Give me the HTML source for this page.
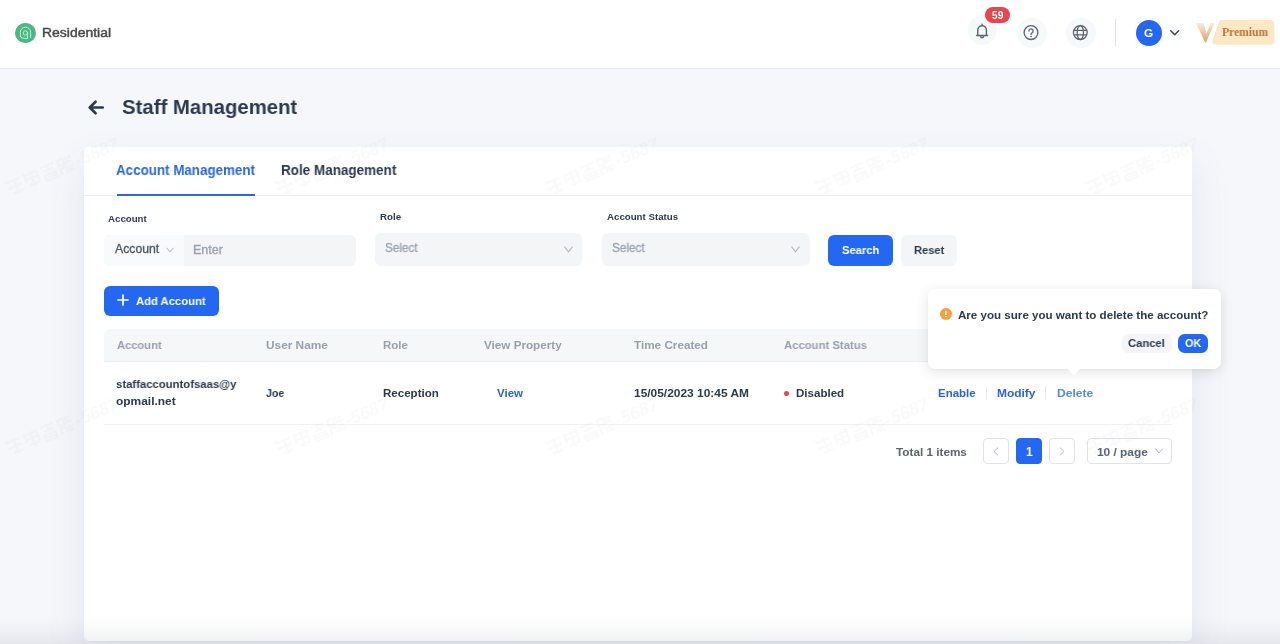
<!DOCTYPE html>
<html><head><meta charset="utf-8">
<style>
*{box-sizing:border-box;margin:0;padding:0}
html,body{width:1280px;height:644px;overflow:hidden}
body{background:#f5f7fb;font-family:"Liberation Sans",sans-serif;color:#2b394d;position:relative}
.hdr{position:absolute;left:0;top:0;width:1280px;height:69px;background:#fff;border-bottom:1px solid #e8e9ef}
.t{position:absolute;white-space:nowrap;line-height:20px;height:20px;will-change:transform}
.b{font-weight:bold}
.card{position:absolute;left:84px;top:147px;width:1108px;height:494px;background:#fff;border-radius:5px;box-shadow:0 18px 40px rgba(70,90,130,.11)}
.box{position:absolute;background:#f3f5f8;border-radius:5px}
.btn{position:absolute;border-radius:5px}
.blue{background:#2468f2 !important}
.circ{position:absolute;width:29.5px;height:29.5px;border-radius:50%;background:#f7f8fa}
.pg{position:absolute;top:438px;height:26px;border:1px solid #e1e3e8;border-radius:4px;background:#fff}
svg{position:absolute;overflow:visible}
</style></head><body>

<!-- HEADER -->
<div class="hdr"></div>
<div id="logo" style="position:absolute;left:15.4px;top:22.7px;width:20.8px;height:20.8px;border-radius:50%;background:#4db682"></div>
<svg style="left:10px;top:17px" width="32" height="32" viewBox="0 0 32 32" fill="none" stroke="#b6f3d4" stroke-width="1" stroke-linecap="round" stroke-linejoin="round">
  <path d="M20.6 20.6 V15.2 A5.1 5.1 0 0 0 10.4 15.2 V19 Q10.4 20.7 12.2 20.9 L17 21.6"/>
  <circle cx="15.4" cy="16" r="2.2"/><path d="M17.6 16 V21.5"/>
</svg>
<span id="brand" class="t" style="-webkit-text-stroke:.45px #4a4a4a;left:42.00px;top:22.50px;font-size:13px;color:#474747;transform:scaleX(1.0727);transform-origin:0 50%">Residential</span>

<div class="circ" style="left:967.5px;top:15.4px"></div>
<div class="circ" style="left:1017px;top:18px"></div>
<div class="circ" style="left:1066px;top:18px"></div>
<!-- bell -->
<svg style="left:975px;top:22.5px" width="14" height="17" viewBox="0 0 14 17" fill="none" stroke="#5b6474" stroke-width="1.4" stroke-linecap="round" stroke-linejoin="round">
  <path d="M1.6 12.5 H12.6 M2.8 12.5 V7 a4.3 4.3 0 0 1 8.6 0 V12.5 M7.1 1.2 V2.4"/>
  <path d="M5.5 13.6 a1.7 1.7 0 0 0 3.2 0"/>
</svg>
<!-- badge -->
<div style="position:absolute;left:985.2px;top:7.2px;width:24.6px;height:16.1px;border-radius:8px;background:#e6464c"></div>
<span id="b59" class="t b" style="left:992.00px;top:5.54px;font-size:10px;color:#fff;transform:scaleX(1.0177);transform-origin:0 50%">59</span>
<!-- help -->
<svg style="left:1023px;top:25px" width="16" height="16" viewBox="0 0 16 16" fill="none" stroke="#5b6474" stroke-width="1.3" stroke-linecap="round">
  <circle cx="8" cy="7.6" r="6.9"/>
  <path d="M5.9 6 a2.1 2.1 0 1 1 3.2 1.8 c-.8.5-1.1.9-1.1 1.8"/>
  <circle cx="8" cy="11.6" r=".5" fill="#5b6474" stroke-width=".6"/>
</svg>
<!-- globe -->
<svg style="left:1072px;top:25px" width="16" height="16" viewBox="0 0 16 16" fill="none" stroke="#5b6474" stroke-width="1.3">
  <circle cx="8.3" cy="7.6" r="6.9"/>
  <ellipse cx="8.3" cy="7.6" rx="3.2" ry="6.9"/>
  <path d="M1.9 5.4 H14.7 M1.9 9.8 H14.7"/>
</svg>
<div style="position:absolute;left:1114.5px;top:19px;width:1.4px;height:26.5px;background:#e3e5eb"></div>
<!-- avatar -->
<div style="position:absolute;left:1136px;top:20px;width:26px;height:26px;border-radius:50%;background:#2468f2"></div>
<span id="avG" class="t b" style="left:1144.00px;top:22.52px;font-size:11.5px;color:#fff;transform:scaleX(1.0240);transform-origin:0 50%">G</span>
<svg style="left:1170px;top:30px" width="10" height="6" viewBox="0 0 10 6" fill="none" stroke="#3a4658" stroke-width="1.5" stroke-linecap="round" stroke-linejoin="round"><path d="M.8 .8 L4.7 4.7 L8.6 .8"/></svg>
<!-- premium -->
<svg style="left:1195px;top:19px" width="82" height="28" viewBox="0 0 82 28">
  <defs><linearGradient id="vg" x1="0" y1="0" x2="0" y2="1"><stop offset="0" stop-color="#fdebd6"/><stop offset="1" stop-color="#d9a273"/></linearGradient></defs>
  <path d="M26.5 1.1 H75.3 a4 4 0 0 1 4 4 V21.8 a4 4 0 0 1 -4 4 H21.8 Q16 25.8 17.6 20.5 L24 3 Q24.8 1.1 26.5 1.1 Z" fill="#fde8c5"/>
  <path d="M1 4 H8.5 L11.5 14.5 L15.5 4 H19.5 L11 23.5 L10 23.5 Z" fill="url(#vg)"/>
</svg>
<span id="prem" class="t b" style="left:1222.00px;top:22.20px;font-size:12px;color:#b9733a;font-family:'Liberation Serif',serif;transform:scaleX(0.9665);transform-origin:0 50%">Premium</span>

<!-- TITLE -->
<svg style="left:88px;top:100px" width="16" height="15" viewBox="0 0 16 15" fill="none" stroke="#2c3a4e" stroke-width="2.6" stroke-linecap="round" stroke-linejoin="round"><path d="M14.8 7.5 H2 M7.6 1.7 L1.7 7.5 L7.6 13.3"/></svg>
<span id="title" class="t b" style="left:122.00px;top:95.42px;font-size:21px;line-height:24px;height:24px;color:#2c3a4e;transform:scaleX(0.9693);transform-origin:0 50%">Staff Management</span>

<!-- CARD -->
<div class="card"></div>
<span id="tab1" class="t b" style="left:116.00px;top:159.95px;font-size:14px;color:#2b68e0;transform:scaleX(0.9554);transform-origin:0 50%">Account Management</span>
<span id="tab2" class="t b" style="left:281.00px;top:159.95px;font-size:14px;color:#2c3a4e;transform:scaleX(0.9625);transform-origin:0 50%">Role Management</span>
<div style="position:absolute;left:84px;top:195px;width:1108px;height:1px;background:#eaecf0"></div>
<div style="position:absolute;left:116.5px;top:193.6px;width:138.8px;height:2.2px;background:#2b68e0"></div>

<!-- FILTERS -->
<span id="l1" class="t b" style="left:108.00px;top:208.94px;font-size:9.7px;color:#2c3a4e;transform:scaleX(0.9930);transform-origin:0 50%">Account</span>
<span id="l2" class="t b" style="left:380.00px;top:207.24px;font-size:9.7px;color:#2c3a4e;transform:scaleX(1.0029);transform-origin:0 50%">Role</span>
<span id="l3" class="t b" style="left:607.00px;top:207.04px;font-size:9.7px;color:#2c3a4e;transform:scaleX(0.9976);transform-origin:0 50%">Account Status</span>

<div class="box" style="left:104px;top:235px;width:252px;height:31px;border-radius:6px;background:#f3f5f7"></div>
<div style="position:absolute;left:104px;top:235px;width:80px;height:31px;background:#f9fafb;border-radius:6px 0 0 6px"></div>
<span id="s0" class="t" style="-webkit-text-stroke:.3px currentColor;left:115.00px;top:239.04px;font-size:12px;color:#4b5668;transform:scaleX(1.0201);transform-origin:0 50%">Account</span>
<svg style="left:166px;top:247px" width="8" height="6" viewBox="0 0 8 6" fill="none" stroke="#aab1bd" stroke-width="1"><path d="M.5 .8 L4 4.8 L7.5 .8"/></svg>
<span id="s1" class="t" style="-webkit-text-stroke:.3px currentColor;left:193.00px;top:239.84px;font-size:12px;color:#9aa2b0;transform:scaleX(1.0403);transform-origin:0 50%">Enter</span>

<div class="box" style="left:375px;top:233px;width:207px;height:33px;border-radius:6px;background:#f3f5f7"></div>
<span id="s2" class="t" style="-webkit-text-stroke:.3px currentColor;left:385.00px;top:238.14px;font-size:12px;color:#9aa2b0;transform:scaleX(0.9777);transform-origin:0 50%">Select</span>
<svg style="left:564.4px;top:246.4px" width="9" height="7" viewBox="0 0 9 7" fill="none" stroke="#b0b6c1" stroke-width="1.1"><path d="M.5 .6 L4.5 5.8 L8.5 .6"/></svg>

<div class="box" style="left:602px;top:233px;width:208px;height:33px;border-radius:6px;background:#f3f5f7"></div>
<span id="s3" class="t" style="-webkit-text-stroke:.3px currentColor;left:612.00px;top:238.14px;font-size:12px;color:#9aa2b0;transform:scaleX(0.9802);transform-origin:0 50%">Select</span>
<svg style="left:791.2px;top:246.4px" width="9" height="7" viewBox="0 0 9 7" fill="none" stroke="#b0b6c1" stroke-width="1.1"><path d="M.5 .6 L4.5 5.8 L8.5 .6"/></svg>

<div class="btn blue" style="left:828px;top:235px;width:65px;height:31px;border-radius:6px"></div>
<span id="bs" class="t b" style="left:842.00px;top:240.02px;font-size:11.5px;color:#fff;transform:scaleX(0.9730);transform-origin:0 50%">Search</span>
<div class="btn" style="left:901px;top:235px;width:56px;height:31px;background:#f3f5f7;border-radius:6px"></div>
<span id="br" class="t b" style="left:914.00px;top:240.02px;font-size:11.5px;color:#2c3a4e;transform:scaleX(0.9687);transform-origin:0 50%">Reset</span>

<!-- ADD ACCOUNT -->
<div class="btn blue" style="left:104px;top:286px;width:115px;height:30px;border-radius:6px"></div>
<svg style="left:117px;top:293.8px" width="12" height="12" viewBox="0 0 12 12" stroke="#fff" stroke-width="1.7" stroke-linecap="round"><path d="M6 1 V11 M1 6 H11"/></svg>
<span id="ba" class="t b" style="left:136.00px;top:291.02px;font-size:11.5px;color:#fff;transform:scaleX(0.9791);transform-origin:0 50%">Add Account</span>

<!-- TABLE -->
<div style="position:absolute;left:104px;top:329px;width:1068px;height:33px;background:#f6f7f9;border-radius:6px 6px 0 0;border-bottom:1px solid #eceef2"></div>
<span id="h1" class="t b" style="left:117.00px;top:335.12px;font-size:11.5px;color:#98a0ae;transform:scaleX(0.9691);transform-origin:0 50%">Account</span>
<span id="h2" class="t b" style="left:266.00px;top:335.12px;font-size:11.5px;color:#98a0ae;transform:scaleX(1.0298);transform-origin:0 50%">User Name</span>
<span id="h3" class="t b" style="left:383.00px;top:335.12px;font-size:11.5px;color:#98a0ae;transform:scaleX(0.9843);transform-origin:0 50%">Role</span>
<span id="h4" class="t b" style="left:484.00px;top:335.12px;font-size:11.5px;color:#98a0ae;transform:scaleX(1.0152);transform-origin:0 50%">View Property</span>
<span id="h5" class="t b" style="left:634.00px;top:335.12px;font-size:11.5px;color:#98a0ae;transform:scaleX(1.0184);transform-origin:0 50%">Time Created</span>
<span id="h6" class="t b" style="left:784.00px;top:335.12px;font-size:11.5px;color:#98a0ae;transform:scaleX(0.9834);transform-origin:0 50%">Account Status</span>

<span id="r1a" class="t b" style="left:116.00px;top:374.32px;font-size:11.5px;transform:scaleX(0.9844);transform-origin:0 50%">staffaccountofsaas@y</span>
<span id="r1b" class="t b" style="left:116.00px;top:391.32px;font-size:11.5px;transform:scaleX(1.0379);transform-origin:0 50%">opmail.net</span>
<span id="r2" class="t b" style="left:266.00px;top:383.02px;font-size:11.5px;transform:scaleX(0.9174);transform-origin:0 50%">Joe</span>
<span id="r3" class="t b" style="left:383.00px;top:383.02px;font-size:11.5px;transform:scaleX(1.0039);transform-origin:0 50%">Reception</span>
<span id="r4" class="t b" style="left:497.00px;top:383.02px;font-size:11.5px;color:#2a63d8;transform:scaleX(1.0024);transform-origin:0 50%">View</span>
<span id="r5" class="t b" style="left:634.00px;top:383.02px;font-size:11.5px;transform:scaleX(1.0375);transform-origin:0 50%">15/05/2023 10:45 AM</span>
<div style="position:absolute;left:783.6px;top:390.6px;width:5.6px;height:5.6px;border-radius:50%;background:#e5484d"></div>
<span id="r6" class="t b" style="left:796.00px;top:383.02px;font-size:11.5px;transform:scaleX(1.0048);transform-origin:0 50%">Disabled</span>
<span id="a1" class="t b" style="left:938.00px;top:383.22px;font-size:11.5px;color:#2a63d8;transform:scaleX(0.9981);transform-origin:0 50%">Enable</span>
<div style="position:absolute;left:986px;top:387px;width:1px;height:13px;background:#e6e8ed"></div>
<span id="a2" class="t b" style="left:997.00px;top:383.22px;font-size:11.5px;color:#2a63d8;transform:scaleX(1.0390);transform-origin:0 50%">Modify</span>
<div style="position:absolute;left:1045px;top:387px;width:1px;height:13px;background:#e6e8ed"></div>
<span id="a3" class="t b" style="left:1057.00px;top:383.22px;font-size:11.5px;color:#5688e8;transform:scaleX(1.0490);transform-origin:0 50%">Delete</span>
<div style="position:absolute;left:104px;top:424px;width:1068px;height:1px;background:#f0f1f4"></div>

<!-- PAGINATION -->
<span id="p0" class="t b" style="left:896.00px;top:442.02px;font-size:11.5px;color:#5a6474;transform:scaleX(1.0210);transform-origin:0 50%">Total 1 items</span>
<div class="pg" style="left:983px;width:26px"></div>
<svg style="left:993px;top:446.5px" width="6" height="9" viewBox="0 0 6 9" fill="none" stroke="#b4bac5" stroke-width="1"><path d="M5 .6 L1 4.5 L5 8.4"/></svg>
<div class="pg blue" style="left:1016px;width:26px;border-color:#2468f2"></div>
<span id="p1" class="t b" style="left:1025.6px;top:441.8px;font-size:12px;color:#fff">1</span>
<div class="pg" style="left:1048.5px;width:26px"></div>
<svg style="left:1058.5px;top:446.5px" width="6" height="9" viewBox="0 0 6 9" fill="none" stroke="#b4bac5" stroke-width="1"><path d="M1 .6 L5 4.5 L1 8.4"/></svg>
<div class="pg" style="left:1087px;width:85px"></div>
<span id="p2" class="t b" style="left:1097.00px;top:442.02px;font-size:11.5px;color:#5a6474;transform:scaleX(1.0330);transform-origin:0 50%">10 / page</span>
<svg style="left:1154.5px;top:448px" width="8" height="6" viewBox="0 0 8 6" fill="none" stroke="#b4bac5" stroke-width="1"><path d="M.5 .6 L4 5 L7.5 .6"/></svg>

<!-- POPOVER -->
<div style="position:absolute;left:928px;top:289px;width:293px;height:80px;background:#fff;border-radius:7px;box-shadow:0 3px 14px rgba(0,0,0,.11),0 1px 3px rgba(0,0,0,.04)"></div>
<svg style="left:1067.8px;top:368.8px" width="12" height="7" viewBox="0 0 12 7"><path d="M0 0 H11.8 L5.9 6.4 Z" fill="#fff"/></svg>
<div style="position:absolute;left:940px;top:308px;width:12px;height:12px;border-radius:50%;background:#f2a23e"></div>
<div style="position:absolute;left:945.4px;top:310.6px;width:1.3px;height:4.2px;background:#fde3bf;border-radius:.5px"></div><div style="position:absolute;left:945.4px;top:315.8px;width:1.3px;height:1.3px;background:#fde3bf;border-radius:50%"></div>
<span id="q" class="t b" style="left:958.00px;top:304.82px;font-size:11.5px;color:#2c3a4e;transform:scaleX(1.0074);transform-origin:0 50%">Are you sure you want to delete the account?</span>
<div class="btn" style="left:1122px;top:334px;width:50px;height:19px;background:#f4f5f8;border-radius:6px"></div>
<span id="qc" class="t b" style="left:1128.00px;top:333.32px;font-size:11.5px;color:#2c3a4e;transform:scaleX(0.9768);transform-origin:0 50%">Cancel</span>
<div class="btn blue" style="left:1178px;top:334px;width:30px;height:19px;border-radius:6.5px"></div>
<span id="qo" class="t b" style="left:1185.00px;top:333.32px;font-size:11.5px;color:#fff;transform:scaleX(0.9387);transform-origin:0 50%">OK</span>

<div style="position:absolute;left:0;top:616px;width:1280px;height:28px;background:linear-gradient(to bottom,rgba(20,30,50,0),rgba(20,30,50,.018) 40%,rgba(20,30,50,.065))"></div>
<svg style="left:0;top:69px;pointer-events:none" width="1280" height="575" viewBox="0 69 1280 575">
  <defs><pattern id="wm" width="270" height="260" patternUnits="userSpaceOnUse" x="-73" y="32">
    <g transform="translate(138,133) rotate(-23)" fill="none" stroke="#000" stroke-width="2.2" opacity=".02">
      <path d="M-60 -6 h13 M-60 0 h13 M-58 6 h10 M-53 -8 v16 M-62 -8 l3 3 M-62 -1 l3 3"/>
      <path d="M-42 -6 h14 M-42 -1 h14 M-40 5 h11 M-35 -8 v16 M-29 -8 v12 M-42 -8 v10"/>
      <path d="M-24 -7 h14 M-22 -2 h10 M-23 2 h12 v6 h-12 z M-17 -8 v6 M-23 5 h12"/>
      <path d="M-6 -7 h6 v6 h-6 z M-6 2 h6 v6 M-6 2 v6 M3 -8 v6 h5 M3 1 v6 h5 M8 -7 l-3 2 M8 2 l-3 2"/>
      <text x="11" y="6.5" font-family="Liberation Sans, sans-serif" font-size="18" font-style="italic" font-weight="bold" fill="#000" stroke="none">-5687</text>
    </g></pattern></defs>
  <rect x="0" y="69" width="1280" height="575" fill="url(#wm)"/>
</svg>
</body></html>
